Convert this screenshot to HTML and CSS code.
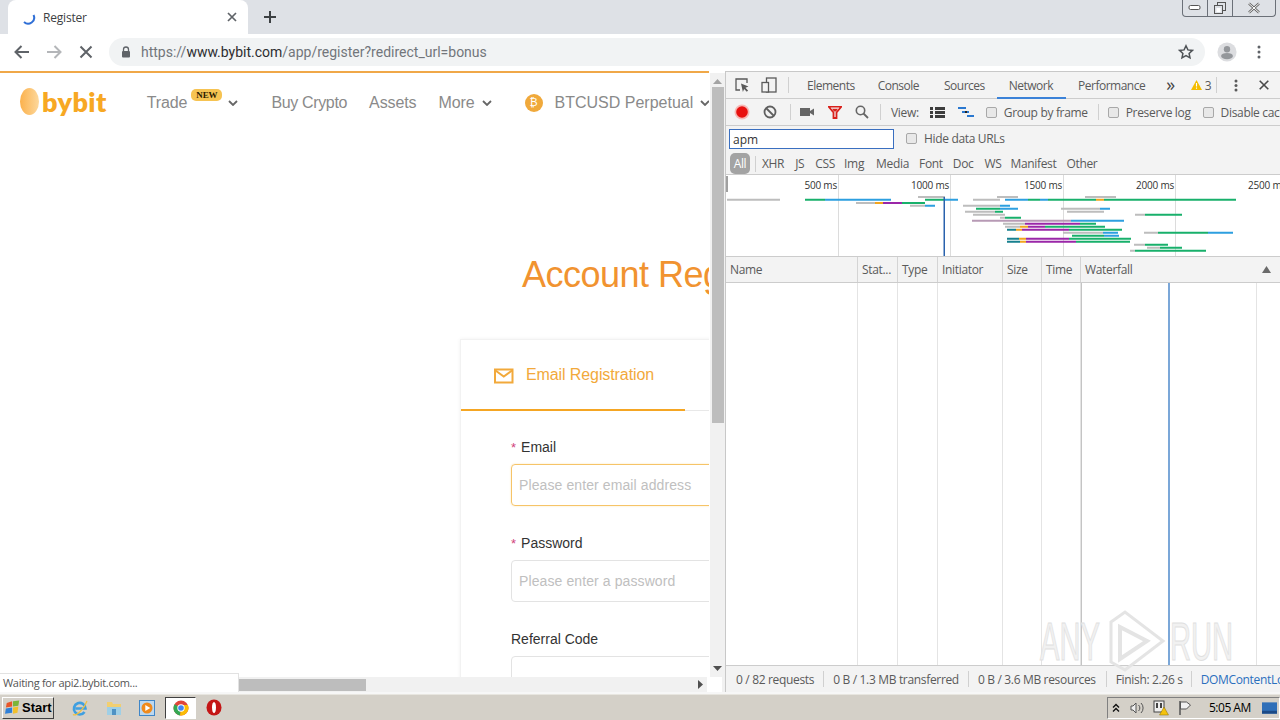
FILE: index.html
```html
<!DOCTYPE html>
<html lang="en">
<head>
<meta charset="utf-8">
<title>Register</title>
<link rel="stylesheet" href="styles.css">
</head>
<body>
<header class="tabstrip">
  <div class="tab">
    <svg class="spinner" width="16" height="16" viewBox="0 0 16 16"><path d="M12.5 6 A6 6 0 0 1 3 13" fill="none" stroke="#2f6fd6" stroke-width="2"/></svg>
    <span class="tab-title">Register</span>
    <svg class="tab-close" width="12" height="12" viewBox="0 0 12 12"><path d="M2 2l8 8M10 2l-8 8" stroke="#5f6368" stroke-width="1.7"/></svg>
  </div>
  <svg class="newtab" width="14" height="14" viewBox="0 0 14 14"><path d="M7 1v12M1 7h12" stroke="#3c4043" stroke-width="2"/></svg>
  <div class="winctl">
    <span class="winbtn"><svg width="14" height="8" viewBox="0 0 14 8"><rect x="1" y="1.5" width="11" height="4" rx="1.5" fill="#fff" stroke="#555"/></svg></span>
    <span class="winbtn"><svg width="14" height="14" viewBox="0 0 14 14"><rect x="4.5" y="1.5" width="8" height="8" fill="none" stroke="#555"/><rect x="1.5" y="4.5" width="8" height="8" fill="#dee1e6" stroke="#555"/><rect x="3.5" y="7" width="4" height="4" fill="#fff"/></svg></span>
    <span class="winbtn winbtn-x"><svg width="14" height="12" viewBox="0 0 14 12"><path d="M2 1.5l10 9M12 1.5l-10 9" stroke="#666" stroke-width="2.4"/><path d="M2 1.5l10 9M12 1.5l-10 9" stroke="#fff" stroke-width="1"/></svg></span>
  </div>
</header>
<nav class="toolbar">
  <svg width="18" height="16" viewBox="0 0 18 16" class="tb-icon tb-back"><path d="M16 8H3M8.5 2L2.5 8l6 6" fill="none" stroke="#5f6368" stroke-width="2"/></svg>
  <svg width="18" height="16" viewBox="0 0 18 16" class="tb-icon tb-fwd"><path d="M2 8h13M9.5 2l6 6-6 6" fill="none" stroke="#b4b6b9" stroke-width="2"/></svg>
  <svg width="14" height="14" viewBox="0 0 14 14" class="tb-icon tb-stop"><path d="M1.500 1.500l11 11M12.500 1.500l-11 11" stroke="#5f6368" stroke-width="2"/></svg>
  <div class="omnibox">
    <svg width="10" height="12" viewBox="0 0 10 12" class="lock"><path d="M2.500 5V3.500a2.500 2.500 0 0 1 5 0V5" fill="none" stroke="#5f6368" stroke-width="1.300"/><rect x="1" y="5" width="8" height="6.500" rx="1" fill="#5f6368"/></svg>
    <span class="url"><span class="url-dim">https://</span>www.bybit.com<span class="url-dim">/app/register?redirect_url=bonus</span></span>
    <svg width="16" height="16" viewBox="0 0 16 16" class="star"><path d="M8 1.800l1.900 4.100 4.500.5-3.300 3 .9 4.400L8 11.600l-4 2.200.9-4.400-3.300-3 4.500-.5z" fill="none" stroke="#4f5357" stroke-width="1.500"/></svg>
  </div>
  <svg width="20" height="20" viewBox="0 0 22 22" class="avatar"><circle cx="11" cy="11" r="10.500" fill="#dcdde0"/><circle cx="11" cy="8" r="3.500" fill="#94979b"/><ellipse cx="11" cy="15.500" rx="6.500" ry="3.500" fill="#94979b"/></svg>
  <svg width="4" height="14" viewBox="0 0 4 14" class="kebab"><circle cx="2" cy="2" r="1.500" fill="#5f6368"/><circle cx="2" cy="7" r="1.500" fill="#5f6368"/><circle cx="2" cy="12" r="1.500" fill="#5f6368"/></svg>
</nav>
<div class="workspace">
  <section class="browser">
    <div class="viewport-row">
      <main class="viewport">
        <div class="site-nav">
          <div class="logo"><span class="logo-mark"></span><span class="logo-text">bybit</span></div>
          <a class="nav-item nav-trade">Trade<span class="badge-new">NEW</span><svg class="chev" width="10" height="6" viewBox="0 0 10 6"><path d="M1 1l4 4 4-4" fill="none" stroke="#666" stroke-width="1.800"/></svg></a>
          <a class="nav-item nav-buy">Buy Crypto</a>
          <a class="nav-item nav-assets">Assets</a>
          <a class="nav-item nav-more">More<svg class="chev" width="10" height="6" viewBox="0 0 10 6"><path d="M1 1l4 4 4-4" fill="none" stroke="#666" stroke-width="1.800"/></svg></a>
          <a class="nav-item nav-btc"><span class="btc-coin">₿</span>BTCUSD Perpetual<svg class="chev" width="10" height="6" viewBox="0 0 10 6"><path d="M1 1l4 4 4-4" fill="none" stroke="#666" stroke-width="1.800"/></svg></a>
        </div>
        <h1 class="page-title">Account Registration</h1>
        <div class="card">
          <div class="card-tabs">
            <div class="card-tab">
              <svg width="20" height="16" viewBox="0 0 20 16"><rect x="1" y="1.500" width="17.500" height="13" fill="none" stroke="#f2a93b" stroke-width="2"/><path d="M1.500 2.500l8.250 6 8.250-6" fill="none" stroke="#f2a93b" stroke-width="2"/></svg>
              <span>Email Registration</span>
            </div>
          </div>
          <form class="reg-form">
            <div class="field">
              <label class="field-label"><i class="req">*</i>Email</label>
              <div class="input input-focus">Please enter email address</div>
            </div>
            <div class="field">
              <label class="field-label"><i class="req">*</i>Password</label>
              <div class="input">Please enter a password</div>
            </div>
            <div class="field">
              <label class="field-label">Referral Code</label>
              <div class="input"></div>
            </div>
          </form>
        </div>
      </main>
      <div class="vscroll">
        <svg width="9" height="5" viewBox="0 0 9 5" class="vs-up"><path d="M4.500 0L9 5H0z" fill="#a3a3a3"/></svg>
        <div class="vs-thumb"></div>
        <svg width="9" height="5" viewBox="0 0 9 5" class="vs-down"><path d="M4.500 5L9 0H0z" fill="#505050"/></svg>
      </div>
    </div>
    <div class="hscroll">
      <div class="hs-thumb"></div>
      <svg width="5" height="9" viewBox="0 0 5 9" class="hs-right"><path d="M5 4.500L0 0v9z" fill="#505050"/></svg>
      <svg width="15" height="15" class="hs-corner"></svg>
    </div>
    <div class="status-bubble">Waiting for api2.bybit.com...</div>
  </section>

  <aside class="devtools">
    <div class="dt-tabs">
      <svg class="dt-i-inspect" width="16" height="16" viewBox="0 0 16 16"><path d="M6 13H2V2h11v4" fill="none" stroke="#5a5a5a" stroke-width="1.300"/><path d="M7 6.500l7.500 3-3 1.300 2.600 2.700-1.300 1.300-2.700-2.700-1.200 3z" fill="#5a5a5a"/></svg>
      <svg class="dt-i-device" width="16" height="16" viewBox="0 0 16 16"><rect x="5.500" y="1" width="9.500" height="14" fill="none" stroke="#5a5a5a" stroke-width="1.300"/><rect x="1" y="5.500" width="6.500" height="9.500" fill="#f3f3f3" stroke="#5a5a5a" stroke-width="1.300"/></svg>
      <span class="dt-sep dt-sep-a"></span>
      <span class="dt-tab dt-t-el">Elements</span>
      <span class="dt-tab dt-t-con">Console</span>
      <span class="dt-tab dt-t-src">Sources</span>
      <span class="dt-tab dt-t-net">Network</span>
      <span class="dt-tab dt-t-perf">Performance</span>
      <span class="dt-more">»</span>
      <svg class="dt-warn" width="11" height="10" viewBox="0 0 11 10"><path d="M5.500 0L11 10H0z" fill="#f4bd00"/><path d="M5.500 3v3.500M5.500 7.500v1.200" stroke="#fff" stroke-width="1.100"/></svg>
      <span class="dt-warn-n">3</span>
      <span class="dt-sep dt-sep-b"></span>
      <svg class="dt-kebab" width="4" height="13" viewBox="0 0 4 13"><circle cx="2" cy="2" r="1.500" fill="#5a5a5a"/><circle cx="2" cy="6.500" r="1.500" fill="#5a5a5a"/><circle cx="2" cy="11" r="1.500" fill="#5a5a5a"/></svg>
      <svg class="dt-close" width="10" height="10" viewBox="0 0 10 10"><path d="M.7.700l8.600 8.600M9.300.700L.7 9.300" stroke="#4a4a4a" stroke-width="1.600"/></svg>
    </div>
    <div class="dt-bar">
      <svg class="b-rec" width="16" height="16" viewBox="0 0 16 16"><circle cx="8" cy="8" r="7.500" fill="#f6b9b6"/><circle cx="8" cy="8" r="5.800" fill="#e8110f"/></svg>
      <svg class="b-clear" width="14" height="14" viewBox="0 0 14 14"><circle cx="7" cy="7" r="5.500" fill="none" stroke="#5f5f5f" stroke-width="1.800"/><path d="M3 3l8 8" stroke="#5f5f5f" stroke-width="1.800"/></svg>
      <span class="dt-sep b-sep1"></span>
      <svg class="b-cam" width="14" height="10" viewBox="0 0 14 10"><rect x="0" y="1" width="10" height="8" fill="#666"/><path d="M10 4l4-2.500v7L10 6z" fill="#666"/></svg>
      <svg class="b-filter" width="14" height="13" viewBox="0 0 14 13"><path d="M.5.500h13L8.500 6.500V12h-3V6.500z" fill="none" stroke="#d9201b" stroke-width="1.800"/><path d="M4 2.800h6L8 5.500H6z" fill="#d9201b"/></svg>
      <svg class="b-search" width="14" height="14" viewBox="0 0 14 14"><circle cx="5.500" cy="5.500" r="4.200" fill="none" stroke="#666" stroke-width="1.600"/><path d="M8.500 8.500l4.500 4.500" stroke="#666" stroke-width="1.800"/></svg>
      <span class="dt-sep b-sep2"></span>
      <span class="b-view">View:</span>
      <svg class="b-list" width="15" height="11" viewBox="0 0 15 11"><path d="M0 0h3v3H0zM5 0h10v3H5zM0 4h3v3H0zM5 4h10v3H5zM0 8h3v3H0zM5 8h10v3H5z" fill="#3d3d3d"/></svg>
      <svg class="b-wf" width="16" height="11" viewBox="0 0 16 11"><path d="M0 0h8v2H0zM4 4h7v2H4zM9 8h7v2H9z" fill="#2a78d0"/><path d="M7 4h2v2H7z" fill="#222"/></svg>
      <label class="chk chk-group"><i class="box"></i>Group by frame</label>
      <span class="dt-sep b-sep3"></span>
      <label class="chk chk-pres"><i class="box"></i>Preserve log</label>
      <label class="chk chk-dis"><i class="box"></i>Disable cache</label>
    </div>
    <div class="dt-filter">
      <div class="filter-input">apm</div>
      <label class="chk chk-hide"><i class="box"></i>Hide data URLs</label>
    </div>
    <div class="dt-types">
      <span class="type-all">All</span>
      <span class="dt-sep type-sep"></span>
      <span class="type t-xhr">XHR</span><span class="type t-js">JS</span><span class="type t-css">CSS</span><span class="type t-img">Img</span><span class="type t-media">Media</span><span class="type t-font">Font</span><span class="type t-doc">Doc</span><span class="type t-ws">WS</span><span class="type t-man">Manifest</span><span class="type t-oth">Other</span>
    </div>
    <div class="dt-overview">
      <svg width="554" height="81" viewBox="726 175 554 81" class="ov-svg">
        <g stroke="#dcdcdc" stroke-width="1"><path d="M838.500 175v81M950.500 175v81M1063.500 175v81M1175.500 175v81"/></g>
        <g class="ov-labels" text-anchor="end"><text x="837" y="189">500 ms</text><text x="949" y="189">1000 ms</text><text x="1062" y="189">1500 ms</text><text x="1174" y="189">2000 ms</text><text x="1286" y="189">2500 ms</text></g>
        <rect x="726" y="176" width="2" height="16" fill="#a0a0a0"/>
        <g id="bars" stroke-width="2" fill="none">
          <path stroke="#bdbdbd" d="M727 199.700h53M918 197h27M973 199.700h27M997 197h21M1085 197h31M856 203h19M910 205.700h15M963 205.700h37M1061 208.700h39M965 211.700h30M1067 211.700h37M973 214.700h32M1135 214.700h10M1000 217.700h5M1003 223.700h22M1005 226.700h15M1063 232.700h40M1144 232.700h14M1134 244.700h11M1147 247.700h13M1130 250.700h5"/>
          <path stroke="#18b06b" d="M805 199.700h20M925 199.700h20M1028 199.700h12M1048 199.700h48M1104 199.700h132M902 203h23M976 208.700h24M995 211.700h8M1145 214.700h37M1005 217.700h16M1080 223.700h16M1045 226.700h60M1069 229.700h53M1158 232.700h50M1072 235.700h32M1069 238.700h62M1076 241.700h54M1145 244.700h23M1160 247.700h22M1135 250.700h71"/>
          <path stroke="#2d9fe0" d="M825 199.700h66M945 199.700h13M1005 199.700h23M1040 199.700h8M925 205.700h10M1000 205.700h10M1000 208.700h18M1100 208.700h10M1071 220.700h53M1103 232.700h15M1208 232.700h25M1104 235.700h15"/>
          <path stroke="#f2a51e" d="M875 203h8M1096 199.700h8M1020 226.700h8M1016 229.700h6M1019 238.700h7M1020 241.700h6"/>
          <path stroke="#9a27a8" d="M883 203h19M1025 223.700h55M1028 226.700h17M1022 229.700h47M1026 238.700h43M1026 241.700h50"/>
          <path stroke="#b79ab5" d="M972 220.700h99"/>
          <path stroke="#17808f" d="M1007 229.700h9M1007 238.700h12M1007 241.700h13"/>
        </g>
        <rect x="943.500" y="197" width="1.500" height="59" fill="#2a62ad"/>
      </svg>
    </div>
    <div class="dt-head">
      <span class="col c-name">Name</span><span class="col c-stat">Stat...</span><span class="col c-type">Type</span><span class="col c-init">Initiator</span><span class="col c-size">Size</span><span class="col c-time">Time</span>
      <span class="col c-wf">Waterfall<svg width="9" height="7" viewBox="0 0 9 7"><path d="M4.500 0L9 7H0z" fill="#6a6a6a"/></svg></span>
    </div>
    <div class="dt-grid">
      <span class="gcol c-name"></span><span class="gcol c-stat"></span><span class="gcol c-type"></span><span class="gcol c-init"></span><span class="gcol c-size"></span><span class="gcol c-time"></span>
      <span class="gcol w1"></span><span class="gcol w2"></span><span class="gcol w3"></span>
      <div class="watermark">
        <span class="wm-text">ANY</span>
        <svg width="60" height="62" viewBox="0 0 60 62"><path d="M4 12L18 2l38 29-38 29-14-8z" fill="none" stroke="#e4e4e4" stroke-width="3"/><path d="M13 17l27 14-27 18z" fill="none" stroke="#e4e4e4" stroke-width="4"/></svg>
        <span class="wm-text wm-run">RUN</span>
      </div>
    </div>
    <div class="dt-foot">
      <span class="f1">0 / 82 requests</span><span class="dt-sep"></span>
      <span class="f2">0 B / 1.3 MB transferred</span><span class="dt-sep"></span>
      <span class="f3">0 B / 3.6 MB resources</span><span class="dt-sep"></span>
      <span class="f4">Finish: 2.26 s</span><span class="dt-sep"></span>
      <span class="f5">DOMContentLoaded: 1.02 s</span>
    </div>
  </aside>
</div>
<footer class="taskbar">
  <button class="start">
    <svg width="16" height="15" viewBox="0 0 18 16"><path d="M2 3l6-2v6l-7 1z" fill="#e8562a"/><path d="M9 1l7-1-1 6-6 1z" fill="#7bb53a"/><path d="M1 9l7-1v6l-8 1z" fill="#2f80d8"/><path d="M9 8l6-1-1 7-5 1z" fill="#f2c02c"/></svg>
    <span>Start</span>
  </button>
  <svg class="tk-ie" width="18" height="18" viewBox="0 0 18 18"><path d="M4.500 9.500h10A5.800 5.800 0 1 0 13.500 13" fill="none" stroke="#3f9fe0" stroke-width="2.600"/><path d="M2 15.500c3 2 11-5 14-13.500" fill="none" stroke="#f0c040" stroke-width="1.200"/></svg>
  <svg class="tk-folder" width="16" height="16" viewBox="0 0 16 16"><path d="M1 2h5l1 2h8v11H1z" fill="#f2cf70"/><rect x="1" y="7" width="14" height="8" fill="#9fcfe6"/><rect x="6" y="9" width="4" height="6" fill="#4f92c4"/></svg>
  <svg class="tk-media" width="16" height="16" viewBox="0 0 16 16"><rect x=".5" y=".5" width="15" height="15" fill="#bcd8f0" stroke="#3f86c8"/><circle cx="8" cy="8" r="5.500" fill="#f08a1c"/><path d="M6.300 5l5 3-5 3z" fill="#fff"/></svg>
  <div class="tk-chrome">
    <svg width="16" height="16" viewBox="0 0 16 16"><circle cx="8" cy="8" r="7.500" fill="#e0453a"/><path d="M8 8L1.500 4.200A7.500 7.500 0 0 0 7 15.400z" fill="#34a853"/><path d="M8 8l-1 7.400A7.500 7.500 0 0 0 14.900 5H8z" fill="#fbbc05"/><circle cx="8" cy="8" r="3.700" fill="#fff"/><circle cx="8" cy="8" r="2.800" fill="#4285f4"/></svg>
  </div>
  <svg class="tk-opera" width="16" height="17" viewBox="0 0 16 17"><ellipse cx="8" cy="8.500" rx="7.500" ry="8" fill="#c41616"/><ellipse cx="8" cy="8.500" rx="2" ry="5.500" fill="#fff"/></svg>
  <div class="tray">
    <svg class="tr-up" width="8" height="10" viewBox="0 0 8 10"><path d="M1 4.500l3-3 3 3M1 8.500l3-3 3 3" fill="none" stroke="#111" stroke-width="1.400"/></svg>
    <svg class="tr-vol" width="16" height="14" viewBox="0 0 16 14"><path d="M2 5h2l3-3v10l-3-3H2z" fill="#eee" stroke="#555"/><path d="M9.500 4a4 4 0 0 1 0 6M12 2a7 7 0 0 1 0 10" fill="none" stroke="#555"/></svg>
    <svg class="tr-net" width="16" height="16" viewBox="0 0 16 16"><rect x="1" y="1" width="10" height="11" fill="#eee" stroke="#444"/><rect x="3" y="3" width="2" height="5" fill="#444"/><rect x="7" y="3" width="2" height="5" fill="#444"/><path d="M11 7l4.500 8h-9z" fill="#f4c20d" stroke="#8a6d00" stroke-width=".5"/></svg>
    <svg class="tr-flag" width="14" height="16" viewBox="0 0 14 16"><path d="M2 1v14" stroke="#555" stroke-width="1.500"/><path d="M2.500 2h6l4 3-4 4h-6z" fill="#f0f0f0" stroke="#555"/></svg>
    <span class="clock">5:05 AM</span>
    <svg class="tr-desk" width="15" height="12" viewBox="0 0 16 12"><rect width="16" height="12" fill="#2f6fb8"/><rect y="9" width="16" height="3" fill="#1c4a86"/></svg>
  </div>
</footer>
</body>
</html>
```

FILE: styles.css
```css
* { box-sizing: border-box; }
html, body { margin: 0; padding: 0; }
body {
  width: 1280px;
  height: 720px;
  overflow: hidden;
  display: flex;
  flex-direction: column;
  background: #f7f7f7;
  font-family: "Liberation Sans", Arial, sans-serif;
}
svg { display: block; flex: none; }

/* window chrome */
.tabstrip {
  height: 34px;
  flex: none;
  display: flex;
  align-items: flex-end;
  padding-left: 8px;
  background: #dee1e6;
  position: relative;
}
.tab {
  width: 240px;
  height: 34px;
  display: flex;
  align-items: center;
  background: #fff;
  border-radius: 8px 8px 0 0;
  padding-left: 13px;
}
.tab-title {
  margin-left: 6px;
  font: 12px "Open Sans", sans-serif;
  color: #3c4043;
  letter-spacing: -0.2px;
}
.tab-close { margin-left: auto; margin-right: 10px; }
.newtab { margin: 0 0 10px 15px; }
.winctl {
  position: absolute;
  right: 4px;
  top: 0;
  display: flex;
  height: 17px;
  border: 1px solid #6b7078;
  border-top: none;
  border-radius: 0 0 4px 4px;
}
.winbtn {
  width: 25px;
  display: flex;
  align-items: center;
  justify-content: center;
  border-right: 1px solid #6b7078;
}
.winbtn-x { width: 42px; border-right: none; }

.toolbar {
  height: 37px;
  flex: none;
  display: flex;
  align-items: center;
  background: #fff;
  padding-bottom: 1px;
}
.tb-back { margin-left: 13px; }
.tb-fwd { margin-left: 14px; }
.tb-stop { margin-left: 16px; }
.omnibox {
  width: 1096px;
  height: 28px;
  margin-left: 16px;
  display: flex;
  align-items: center;
  background: #f1f3f4;
  border-radius: 14px;
  padding-left: 12px;
}
.url {
  margin-left: 10px;
  font: 14px Roboto, sans-serif;
  color: #2c2d30;
  letter-spacing: 0;
}
.url-dim { color: #72767b; }
.star { margin-left: auto; margin-right: 11px; }
.avatar { margin-left: 12px; }
.kebab { margin-left: 20px; }

.workspace {
  flex: none;
  height: 623px;
  display: flex;
  align-items: flex-start;
}

/* browser page */
.browser {
  width: 725px;
  position: relative;
  flex: none;
  display: flex;
  flex-direction: column;
}
.viewport-row { display: flex; height: 606px; flex: none; background: #fff; }
.viewport {
  width: 709px;
  height: 606px;
  overflow: hidden;
  background: #fff;
  border-top: 2px solid #f0a848;
  flex: none;
}
.site-nav {
  width: 900px;
  height: 57px;
  display: flex;
  align-items: center;
  padding-top: 2px;
  color: #8a8a8a;
  font-size: 16px;
  letter-spacing: -0.1px;
}
.logo { display: flex; align-items: center; margin-left: 20px; margin-top: -2px; }
.logo-mark {
  width: 19px;
  height: 27px;
  border-radius: 50%;
  background: linear-gradient(90deg, #fbb14c, #fdd89c);
}
.logo-text {
  margin-left: 3px;
  font: 800 27px/30px Lato, sans-serif;
  color: #f7a823;
  letter-spacing: 0.4px;
}
.nav-item { display: flex; align-items: center; white-space: nowrap; position: relative; }
.nav-trade { margin-left: 40px; }
.badge-new {
  position: relative;
  top: -8px;
  margin-left: 4px;
  width: 31px;
  height: 12px;
  border-radius: 5px;
  background: #f6c352;
  color: #2a1a00;
  font: bold 9px/12px "Liberation Serif", serif;
  text-align: center;
}
.nav-trade .chev { margin-left: 6px; }
.nav-buy { margin-left: 33px; letter-spacing: -0.35px; }
.nav-assets { margin-left: 22px; }
.nav-more { margin-left: 22px; }
.nav-more .chev { margin-left: 7px; }
.nav-btc { margin-left: 33px; letter-spacing: 0; }
.nav-btc .chev { margin-left: 7px; }
.btc-coin {
  width: 18px;
  height: 18px;
  margin-right: 12px;
  border-radius: 50%;
  background: #f0a93b;
  color: #fff;
  font: 11px/18px "DejaVu Sans", sans-serif;
  text-align: center;
}
.page-title {
  width: 900px;
  margin: 125px 0 44px 522px;
  font-size: 36px;
  line-height: 40px;
  font-weight: 400;
  color: #f19330;
  letter-spacing: -0.5px;
  white-space: nowrap;
}
.card {
  width: 640px;
  margin-left: 460px;
  background: #fff;
  border: 1px solid #f2f2f2;
  box-shadow: 0 0 4px rgba(0,0,0,.06);
}
.card-tabs { height: 71px; border-bottom: 1px solid #e8e8e8; }
.card-tab {
  width: 224px;
  height: 71px;
  display: flex;
  align-items: center;
  padding: 0 0 0 33px;
  border-bottom: 2px solid #f5a623;
  color: #f2a93b;
  font-size: 16px;
  letter-spacing: -0.1px;
}
.card-tab svg { margin-top: 3px; }
.card-tab span { margin-left: 12px; }
.reg-form { padding: 26px 0 0 50px; }
.field { margin-bottom: 27px; }
.field-label {
  display: block;
  height: 20px;
  margin-bottom: 7px;
  font-size: 14px;
  line-height: 20px;
  color: #333;
}
.req { color: #d0437c; font-style: normal; margin-right: 5px; font-size: 13px; }
.input {
  width: 400px;
  height: 42px;
  padding-left: 7px;
  border: 1px solid #e3e3e3;
  border-radius: 4px;
  font-size: 14px;
  line-height: 40px;
  letter-spacing: 0.1px;
  color: #c0c0c0;
}
.input-focus { border-color: #f6c468; box-shadow: 0 0 2px #fbe2b2; }

.vscroll {
  width: 15px;
  flex: none;
  margin-left: 1px;
  padding-top: 6px;
  background: #f1f1f1;
  border-top: 2px solid #fff;
  display: flex;
  flex-direction: column;
  align-items: center;
}
.vs-thumb { width: 12px; height: 336px; margin-top: 3px; background: #bdbdbd; }
.vs-down { margin-top: auto; margin-bottom: 6px; }
.hscroll {
  height: 15px;
  flex: none;
  display: flex;
  align-items: center;
  background: #f1f1f1;
  padding-left: 200px;
}
.hs-thumb { width: 166px; height: 12px; background: #bdbdbd; }
.hs-right { margin-left: 332px; }
.hs-corner { margin-left: 4px; background: #fff; }
.status-bubble {
  position: absolute;
  left: 0;
  top: 602px;
  width: 239px;
  height: 19px;
  padding-left: 3px;
  background: #fff;
  border-top: 1px solid #e2e2e2;
  border-right: 1px solid #e2e2e2;
  font: 11px/18px "Open Sans", sans-serif;
  letter-spacing: -0.3px;
  color: #555;
}

/* devtools */
.devtools {
  width: 555px;
  height: 621px;
  flex: none;
  display: flex;
  flex-direction: column;
  background: #fff;
  border-top: 1px solid #c8c8c8;
  border-left: 1px solid #c8c8c8;
  font: 12px "Open Sans", sans-serif;
  letter-spacing: -0.33px;
  color: #5a5a5a;
  overflow: hidden;
}
.dt-tabs, .dt-bar, .dt-filter, .dt-types, .dt-foot {
  display: flex;
  align-items: center;
  background: #f3f3f3;
  white-space: nowrap;
  flex: none;
}
.dt-tabs { height: 27px; border-bottom: 1px solid #ccc; position: relative; }
.dt-tab { letter-spacing: -0.5px; }
.dt-sep { width: 1px; height: 16px; background: #d0d0d0; flex: none; }
.dt-i-inspect { margin-left: 8px; }
.dt-i-device { margin-left: 11px; }
.dt-sep-a { margin-left: 11px; }
.dt-t-el { margin-left: 18px; }
.dt-t-con { margin-left: 23px; }
.dt-t-src { margin-left: 25px; }
.dt-t-net { margin-left: 24px; }
.dt-t-net::after {
  content: "";
  position: absolute;
  left: 271px;
  width: 69px;
  bottom: -1px;
  height: 2px;
  background: #3b82d8;
}
.dt-t-perf { margin-left: 25px; }
.dt-more { margin-left: 21px; font-size: 18px; line-height: 18px; margin-top: -3px; color: #444; }
.dt-warn { margin-left: 16px; }
.dt-warn-n { margin-left: 3px; }
.dt-sep-b { margin-left: 5px; }
.dt-kebab { margin-left: 17px; }
.dt-close { margin-left: 21px; }

.dt-bar { height: 27px; border-bottom: 1px solid #ccc; }
.b-rec { margin-left: 8px; }
.b-clear { margin-left: 13px; }
.b-sep1 { margin-left: 13px; }
.b-cam { margin-left: 9px; }
.b-filter { margin-left: 14px; }
.b-search { margin-left: 13px; }
.b-sep2 { margin-left: 11px; }
.b-view { margin-left: 10px; }
.b-list { margin-left: 11px; }
.b-wf { margin-left: 13px; }
.chk { display: flex; align-items: center; }
.box {
  width: 11px;
  height: 11px;
  border: 1px solid #a8a8a8;
  border-radius: 2px;
  background: #e8e8e8;
  margin-right: 7px;
  flex: none;
}
.chk-group { margin-left: 12px; }
.b-sep3 { margin-left: 10px; }
.chk-pres { margin-left: 9px; }
.chk-dis { margin-left: 12px; }

.dt-filter { height: 25px; }
.filter-input {
  width: 165px;
  height: 20px;
  margin-left: 3px;
  padding-left: 3px;
  background: #fff;
  border: 1px solid #3a6fc0;
  line-height: 19px;
  color: #333;
  letter-spacing: 0;
}
.chk-hide { margin-left: 12px; }
.dt-types { height: 24px; padding-top: 2px; border-bottom: 1px solid #ccc; }
.type-all {
  width: 20px;
  height: 21px;
  margin-left: 4px;
  border-radius: 5px;
  background: #a3a3a3;
  color: #fff;
  line-height: 21px;
  text-align: center;
}
.type-sep { margin-left: 5px; }
.t-xhr { margin-left: 6px; }
.t-js { margin-left: 11px; }
.t-css { margin-left: 11px; }
.t-img { margin-left: 9px; }
.t-media { margin-left: 12px; }
.t-font { margin-left: 10px; }
.t-doc { margin-left: 10px; }
.t-ws { margin-left: 11px; }
.t-man { margin-left: 9px; }
.t-oth { margin-left: 10px; }

.dt-overview { height: 81px; flex: none; background: #fff; }
.ov-labels { font: 10px "Open Sans", sans-serif; fill: #333; letter-spacing: -0.2px; }

.dt-head {
  height: 27px;
  flex: none;
  display: flex;
  background: #f3f3f3;
  border-top: 1px solid #ccc;
  border-bottom: 1px solid #ccc;
}
.col {
  display: flex;
  align-items: center;
  padding-left: 4px;
  border-right: 1px solid #d4d4d4;
  white-space: nowrap;
}
.c-name { width: 132px; }
.c-stat { width: 40px; }
.c-type { width: 40px; }
.c-init { width: 65px; }
.c-size { width: 39px; }
.c-time { width: 39px; }
.c-wf {
  flex: 1;
  border-right: none;
  padding-right: 9px;
  justify-content: space-between;
}
.dt-grid {
  flex: 1;
  min-height: 0;
  display: flex;
  position: relative;
  background: #fff;
}
.gcol { display: block; height: 100%; border-right: 1px solid #e4e4e4; flex: none; }
.w1 { width: 89px; border-left: 1px solid #c4c4c4; border-right: 2px solid #7ba7d8; }
.w2 { width: 87px; }
.w3 { flex: 1; border-right: none; }
.watermark {
  position: absolute;
  left: 314px;
  top: 327px;
  display: flex;
  align-items: center;
  gap: 5px;
}
.wm-text {
  display: inline-block;
  width: 62px;
  font: 400 54px/56px "Liberation Sans", sans-serif;
  letter-spacing: 0;
  color: #f1f1f1;
  -webkit-text-stroke: 1px #e0e0e0;
  transform: scaleX(.54);
  transform-origin: left center;
  white-space: nowrap;
}
.wm-run { margin-left: -2px; }
.dt-foot {
  height: 27px;
  border-top: 1px solid #ccc;
}
.f1 { margin-left: 10px; margin-right: 9px; }
.f2 { margin-left: 9px; margin-right: 9px; }
.f3 { margin-left: 9px; margin-right: 10px; }
.f4 { margin-left: 9px; margin-right: 8px; }
.f5 { margin-left: 9px; color: #2a6fbe; }

/* taskbar */
.taskbar {
  height: 26px;
  flex: none;
  display: flex;
  align-items: center;
  background: #d4d0c8;
  border-top: 1px solid #e8e6e0;
  position: relative;
}
.start {
  width: 52px;
  height: 22px;
  margin-left: 2px;
  padding: 0 0 0 2px;
  display: flex;
  align-items: center;
  gap: 1px;
  background: #d4d0c8;
  border: 1px solid;
  border-color: #fff #404040 #404040 #fff;
  font: bold 13px "Liberation Sans", sans-serif;
  color: #000;
}
.tk-ie { margin-left: 17px; }
.tk-folder { margin-left: 17px; }
.tk-media { margin-left: 17px; }
.tk-chrome {
  width: 31px;
  height: 22px;
  margin-left: 10px;
  display: flex;
  align-items: center;
  justify-content: center;
  background: #fff;
  border: 1px solid;
  border-color: #404040 #fff #fff #404040;
}
.tk-opera { margin-left: 10px; }
.tray {
  margin-left: auto;
  width: 173px;
  height: 22px;
  display: flex;
  align-items: center;
  border: 1px solid;
  border-color: #808080 #fff #fff #808080;
  padding-left: 4px;
  font: 12px "Open Sans", sans-serif;
  letter-spacing: -0.5px;
  color: #000;
}
.tr-vol { margin-left: 9px; }
.tr-net { margin-left: 8px; }
.tr-flag { margin-left: 9px; }
.clock { margin-left: 17px; }
.tr-desk { margin-left: 11px; }
```
